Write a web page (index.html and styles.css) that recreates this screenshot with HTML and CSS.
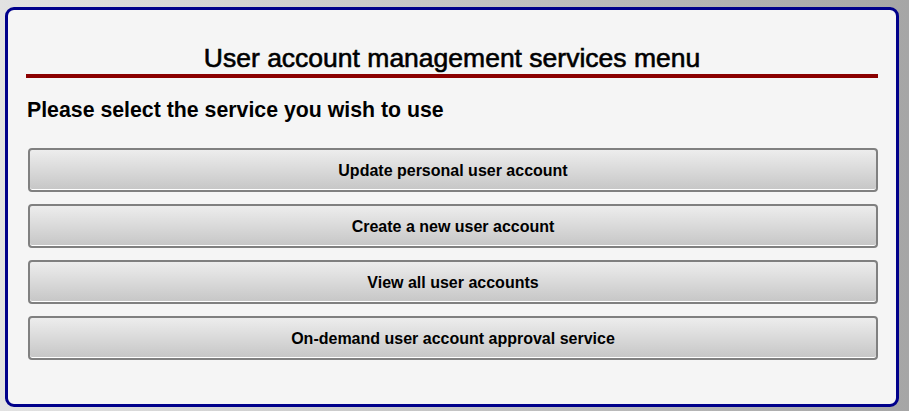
FILE: index.html
```html
<!DOCTYPE html>
<html>
<head>
<meta charset="utf-8">
<link rel="stylesheet" href="styles.css">
</head>
<body>
<div class="card">
  <h1 class="title">User account management services menu</h1>
  <div class="rule"></div>
  <h2 class="subtitle">Please select the service you wish to use</h2>
  <div class="menu">
    <button class="btn">Update personal user account</button>
    <button class="btn">Create a new user account</button>
    <button class="btn">View all user accounts</button>
    <button class="btn">On-demand user account approval service</button>
  </div>
</div>
</body>
</html>
```
FILE: styles.css
```css
html, body {
  margin: 0;
  padding: 0;
  height: 100%;
}
body {
  background: linear-gradient(to right, #e2e2e2, #a6a6a6);
  font-family: "Liberation Sans", Arial, sans-serif;
  overflow: hidden;
}
.card {
  box-sizing: border-box;
  margin: 7px 0 0 5px;
  width: 894px;
  height: 400px;
  border: 3px solid #00008b;
  border-radius: 9px;
  background: #f5f5f5;
  padding: 34px 18px 0 18px;
}
.title {
  margin: 0;
  font-size: 26.5px;
  font-weight: normal;
  line-height: 29px;
  text-align: center;
  color: #000;
  -webkit-text-stroke: 0.6px #000;
}
.rule {
  height: 4px;
  background: #8b0000;
  margin-top: 1px;
}
.subtitle {
  margin: 19px 0 0 1px;
  font-size: 21.3px;
  font-weight: bold;
  line-height: 26px;
  color: #000;
}
.menu {
  display: flex;
  flex-direction: column;
  gap: 12.5px;
  margin: 25px 0 0 2px;
}
.btn {
  box-sizing: border-box;
  height: 43.5px;
  width: 100%;
  border: 2px solid #808080;
  border-radius: 4px;
  background: linear-gradient(to bottom, #ededed, #c6c6c6);
  box-shadow: inset 0 -1px 0 #ffffff;
  font-family: "Liberation Sans", Arial, sans-serif;
  font-size: 16px;
  font-weight: bold;
  color: #000;
  padding: 3px 0 0 0;
}
```
